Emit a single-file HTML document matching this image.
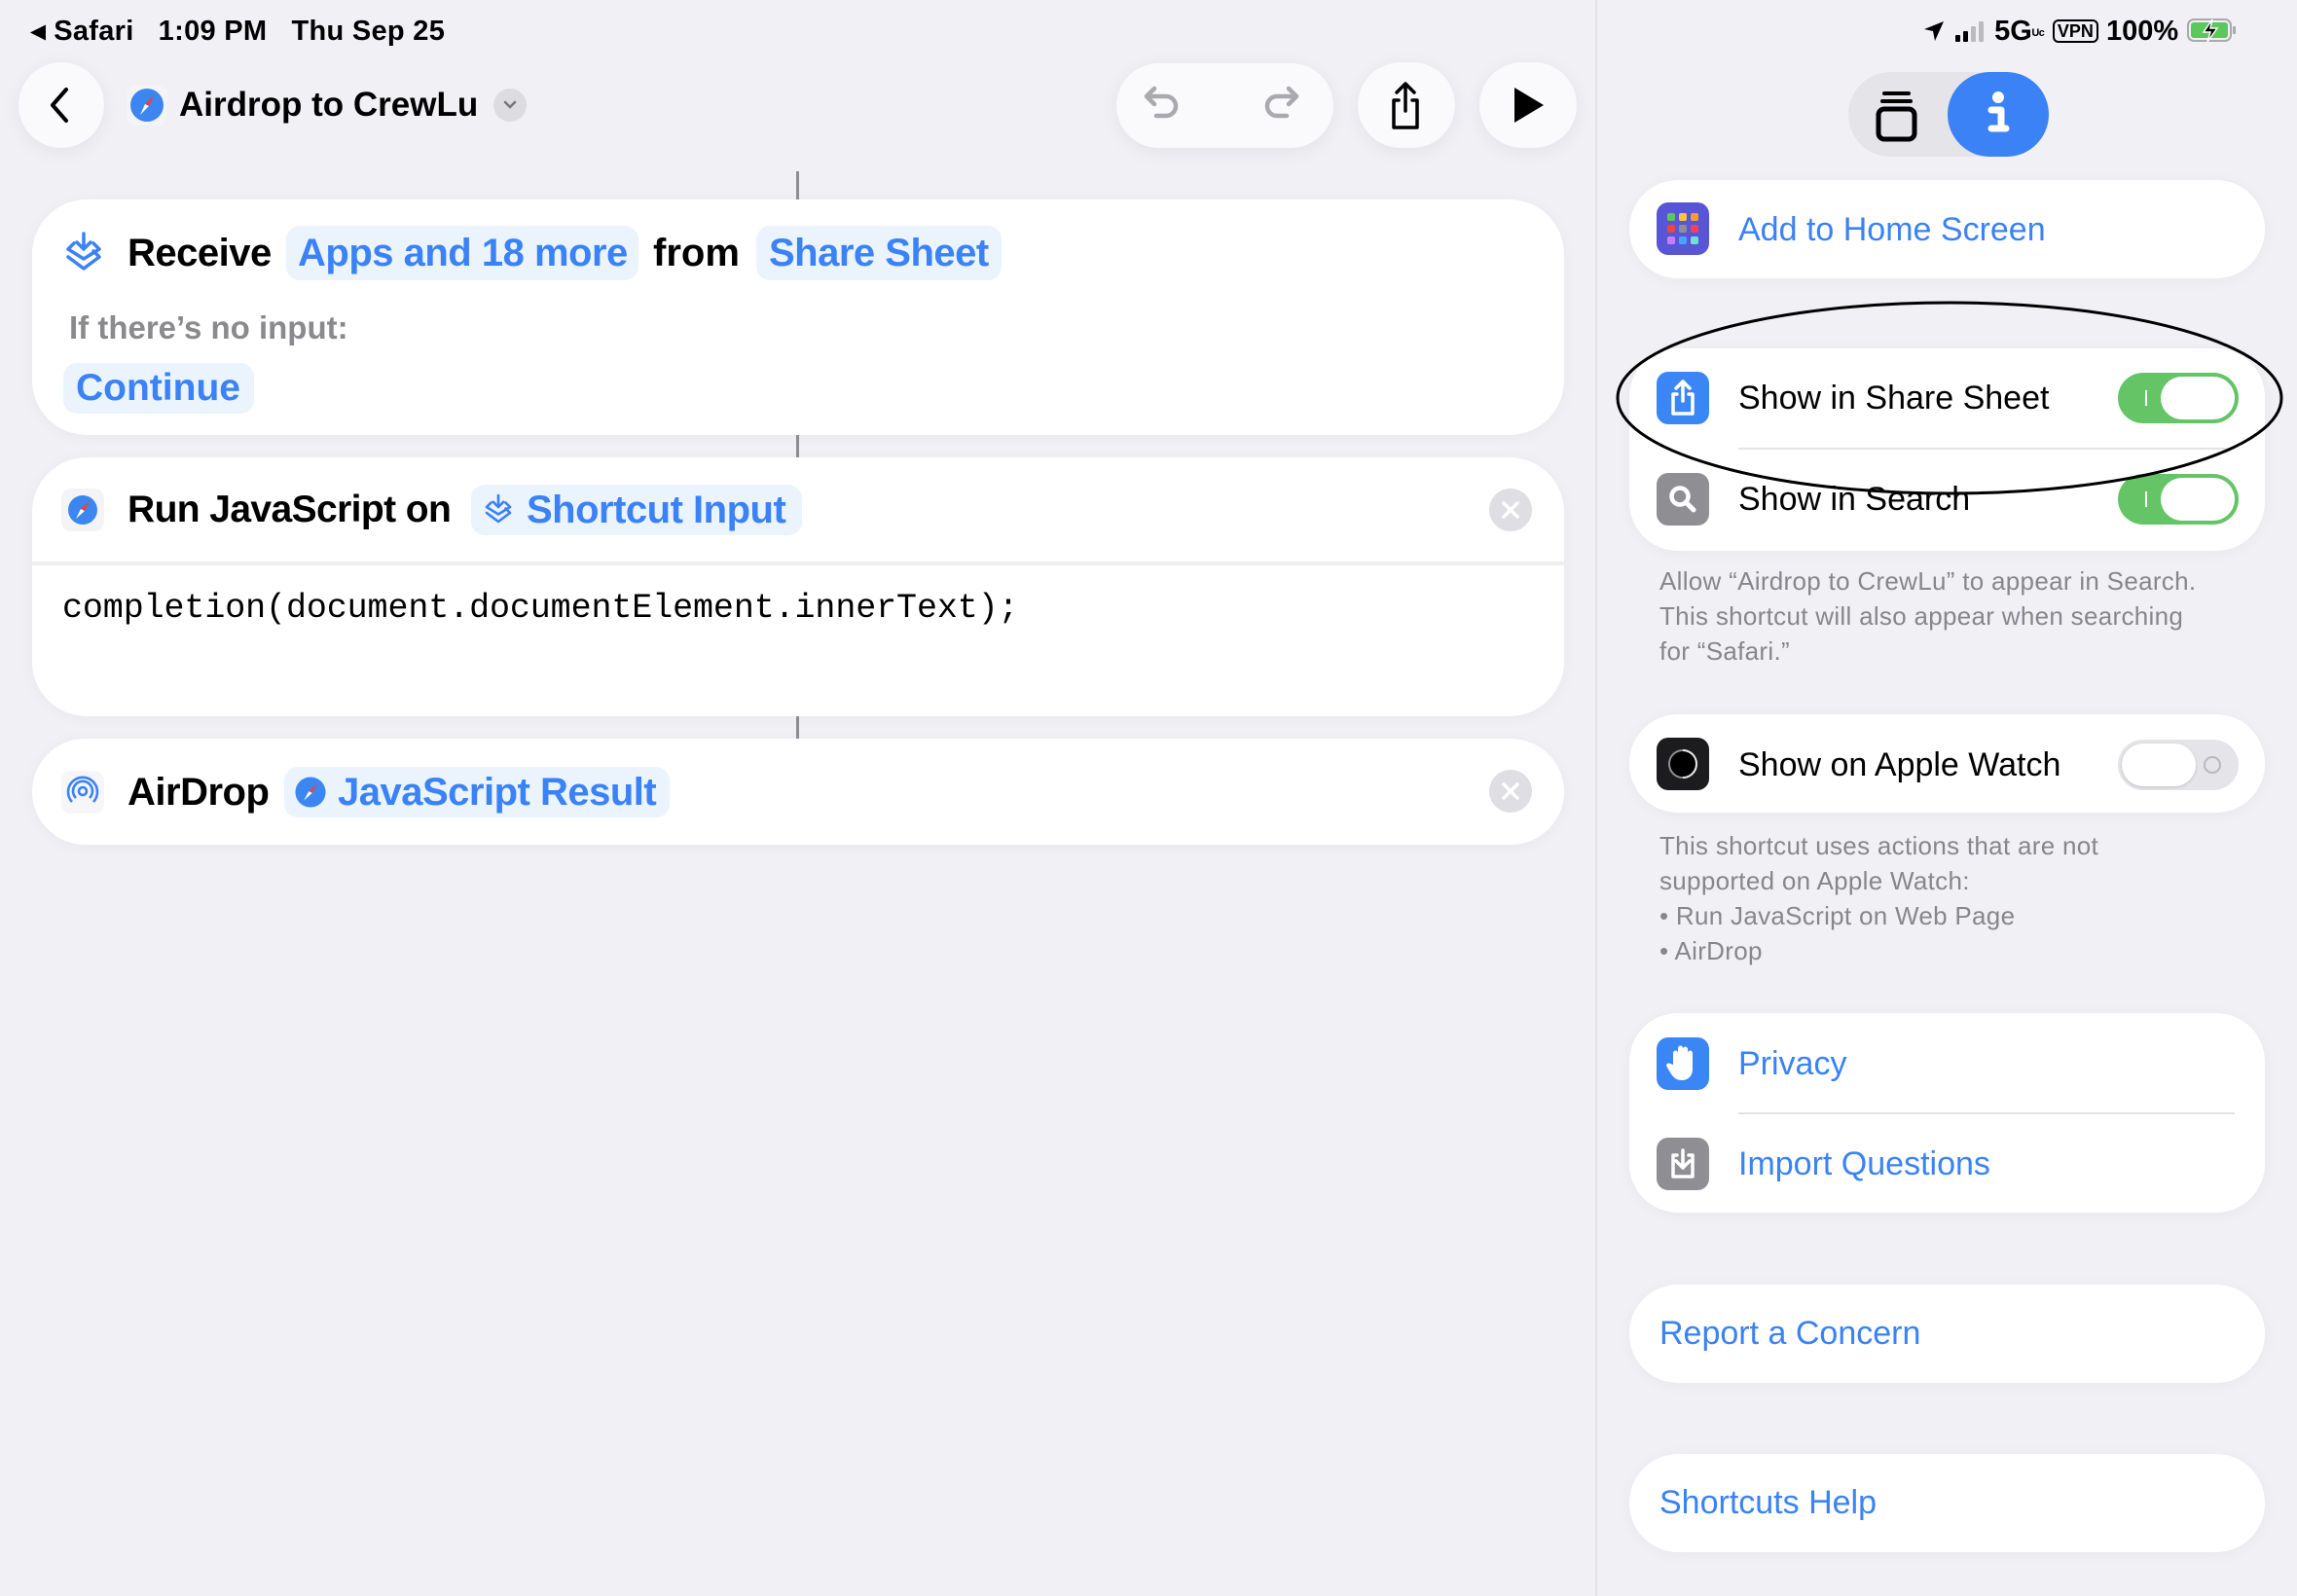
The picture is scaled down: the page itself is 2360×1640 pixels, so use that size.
<!DOCTYPE html>
<html><head><meta charset="utf-8"><style>
*{margin:0;padding:0;box-sizing:border-box}
body{width:2360px;height:1640px;background:#f0f0f5;font-family:"Liberation Sans",sans-serif;position:relative;overflow:hidden;color:#000}
.a{position:absolute}
.t{position:absolute;white-space:nowrap}
.card{position:absolute;background:#fff;border-radius:56px;box-shadow:0 2px 16px rgba(0,0,0,0.04)}
.blue{color:#3a82f6}
.tok{position:absolute;background:#ebf3fd;border-radius:14px}
.circ{position:absolute;background:#fafafd;border-radius:50%;box-shadow:0 4px 20px rgba(0,0,0,0.06)}
.sw{position:absolute;width:124px;height:52px;border-radius:26px;background:#65c466}
.sw .k{position:absolute;right:4px;top:4px;width:76px;height:44px;border-radius:22px;background:#fff}
.sw .l{position:absolute;left:28px;top:18px;width:2px;height:16px;background:#fff}
.foot{position:absolute;left:1705px;font-size:26px;color:#86868b;line-height:36px;letter-spacing:0.3px}
.ri{position:absolute;width:54px;height:54px;border-radius:12px}
</style></head><body>
<div class="a" style="left:1639px;top:0;width:2px;height:1640px;background:#e2e2e7"></div>

<div class="t" style="left:32px;top:15px;font-size:29px;font-weight:bold;line-height:34px;letter-spacing:0.3px">◂ Safari&nbsp;&nbsp; 1:09 PM&nbsp;&nbsp; Thu Sep 25</div>
<div class="t" style="left:1975px;top:15px;font-size:29px;font-weight:bold;line-height:34px">
<svg width="24" height="24" viewBox="0 0 24 24" style="vertical-align:-3px"><path d="M22 2L2 10l9 2 2 10z" fill="#000"/></svg>
<svg width="34" height="24" viewBox="0 0 34 24" style="vertical-align:-3px"><rect x="2" y="16" width="5" height="7" rx="1"/><rect x="10" y="12" width="5" height="11" rx="1"/><rect x="18" y="7" width="5" height="16" rx="1" fill="#bbb"/><rect x="26" y="2" width="5" height="21" rx="1" fill="#bbb"/></svg>
5G<span style="font-size:16px">ᵁᶜ</span> <span style="font-size:18px;border:2px solid #000;border-radius:6px;padding:0 3px;vertical-align:3px">VPN</span> 100%
<svg width="54" height="28" viewBox="0 0 54 28" style="vertical-align:-4px"><rect x="2" y="3" width="44" height="22" rx="6" fill="none" stroke="#aaa" stroke-width="2"/><rect x="5" y="6" width="38" height="16" rx="3" fill="#5ac85a"/><rect x="48" y="10" width="3" height="8" rx="1" fill="#aaa"/><path d="M27 3l-9 13h7l-3 10 10-14h-7z" fill="#000" stroke="#fff" stroke-width="1.5"/></svg>
</div>

<div class="circ" style="left:19px;top:64px;width:88px;height:88px"></div>
<svg class="a" style="left:48px;top:88px" width="30" height="40" viewBox="0 0 30 40"><path d="M20 4L6 20l14 16" fill="none" stroke="#000" stroke-width="4" stroke-linecap="round" stroke-linejoin="round"/></svg>
<svg class="a" style="left:130px;top:87px" width="42" height="42" viewBox="0 0 42 42"><rect width="42" height="42" rx="9" fill="#f4f4f6"/><circle cx="21" cy="21" r="17" fill="#3b86f0"/><path d="M28 11L19 20l4 2z" fill="#ff3b30"/><path d="M14 31l5-11 4 2z" fill="#fff"/></svg>
<div class="t" style="left:184px;top:86px;font-size:35px;font-weight:bold;line-height:44px">Airdrop to CrewLu</div>
<div class="a" style="left:507px;top:91px;width:34px;height:34px;border-radius:50%;background:#dcdce1"></div>
<svg class="a" style="left:515px;top:101px" width="18" height="14" viewBox="0 0 18 14"><path d="M4 4l5 5 5-5" fill="none" stroke="#777" stroke-width="2.5" stroke-linecap="round"/></svg>

<div class="a" style="left:1147px;top:65px;width:223px;height:87px;border-radius:44px;background:#fafafd;box-shadow:0 4px 20px rgba(0,0,0,0.06)"></div>
<svg class="a" style="left:1172px;top:85px" width="46" height="46" viewBox="0 0 46 46"><path d="M14 6L6 14l8 8M6 14h20a10 10 0 0 1 0 20h-10" fill="none" stroke="#a9a9ae" stroke-width="4.5" stroke-linecap="round" stroke-linejoin="round"/></svg>
<svg class="a" style="left:1292px;top:85px" width="46" height="46" viewBox="0 0 46 46"><path d="M32 6l8 8-8 8M40 14H20a10 10 0 0 0 0 20h10" fill="none" stroke="#a9a9ae" stroke-width="4.5" stroke-linecap="round" stroke-linejoin="round"/></svg>
<div class="circ" style="left:1395px;top:64px;width:100px;height:88px;border-radius:44px"></div>
<svg class="a" style="left:1424px;top:82px" width="40" height="54" viewBox="0 0 40 54"><path d="M20 4v28M11 13l9-9 9 9M13 21H8v28h24V21h-5" fill="none" stroke="#000" stroke-width="3.5" stroke-linecap="round" stroke-linejoin="round"/></svg>
<div class="circ" style="left:1520px;top:64px;width:100px;height:88px;border-radius:44px"></div>
<svg class="a" style="left:1552px;top:88px" width="36" height="40" viewBox="0 0 36 40"><path d="M4 2l30 18L4 38z" fill="#000"/></svg>

<div class="a" style="left:818px;top:176px;width:3px;height:30px;background:#8e8e93"></div>
<div class="a" style="left:818px;top:447px;width:3px;height:23px;background:#8e8e93"></div>
<div class="a" style="left:818px;top:736px;width:3px;height:23px;background:#8e8e93"></div>

<div class="card" style="left:33px;top:205px;width:1574px;height:242px"></div>
<svg class="a" style="left:66px;top:237px" width="40" height="46" viewBox="0 0 40 46"><path d="M20 3v16M13 12l7 7 7-7M10 13l-6 6 16 10 16-10-6-6M4 27l16 12 16-12-6-6" fill="none" stroke="#3a82f6" stroke-width="3.5" stroke-linecap="round" stroke-linejoin="round"/></svg>
<div class="t" style="left:131px;top:237px;font-size:40px;font-weight:bold;line-height:46px;letter-spacing:-0.5px">Receive</div>
<div class="tok" style="left:294px;top:232px;width:362px;height:56px"></div>
<div class="t blue" style="left:306px;top:237px;font-size:40px;font-weight:bold;line-height:46px;letter-spacing:-0.5px">Apps and 18 more</div>
<div class="t" style="left:671px;top:237px;font-size:40px;font-weight:bold;line-height:46px">from</div>
<div class="tok" style="left:777px;top:232px;width:252px;height:56px"></div>
<div class="t blue" style="left:790px;top:237px;font-size:40px;font-weight:bold;line-height:46px;letter-spacing:-0.5px">Share Sheet</div>
<div class="t" style="left:71px;top:317px;font-size:33px;font-weight:bold;color:#8a8a8e;line-height:40px">If there’s no input:</div>
<div class="tok" style="left:65px;top:373px;width:196px;height:52px"></div>
<div class="t blue" style="left:78px;top:376px;font-size:39px;font-weight:bold;line-height:46px">Continue</div>

<div class="card" style="left:33px;top:470px;width:1574px;height:266px"></div>
<div class="a" style="left:33px;top:577px;width:1574px;height:4px;background:#eeeef0"></div>
<svg class="a" style="left:63px;top:502px" width="44" height="44" viewBox="0 0 44 44"><rect width="44" height="44" rx="10" fill="#f4f4f6"/><circle cx="22" cy="22" r="15" fill="#3b86f0"/><path d="M29 13L20 21l4 2z" fill="#ff3b30"/><path d="M15 31l5-10 4 2z" fill="#fff"/></svg>
<div class="t" style="left:131px;top:501px;font-size:39px;font-weight:bold;line-height:46px;letter-spacing:-0.6px">Run JavaScript on</div>
<div class="tok" style="left:484px;top:498px;width:340px;height:52px"></div>
<svg class="a" style="left:497px;top:505px" width="30" height="38" viewBox="0 0 40 46"><path d="M20 3v16M13 12l7 7 7-7M10 13l-6 6 16 10 16-10-6-6M4 27l16 12 16-12-6-6" fill="none" stroke="#3a82f6" stroke-width="3.5" stroke-linecap="round" stroke-linejoin="round"/></svg>
<div class="t blue" style="left:541px;top:501px;font-size:40px;font-weight:bold;line-height:46px;letter-spacing:-0.5px">Shortcut Input</div>
<div class="a" style="left:1530px;top:502px;width:44px;height:44px;border-radius:50%;background:#dedee3"></div>
<svg class="a" style="left:1530px;top:502px" width="44" height="44" viewBox="0 0 44 44"><path d="M15 15l14 14M29 15L15 29" stroke="#fff" stroke-width="3.5" stroke-linecap="round"/></svg>
<div class="t" style="left:64px;top:604px;font-family:'Liberation Mono',monospace;font-size:35px;line-height:42px;letter-spacing:-0.1px">completion(document.documentElement.innerText);</div>

<div class="card" style="left:33px;top:759px;width:1574px;height:109px"></div>
<svg class="a" style="left:63px;top:792px" width="44" height="44" viewBox="0 0 44 44"><rect width="44" height="44" rx="10" fill="#f6f6f8"/><g fill="none" stroke="#3a82f6" stroke-width="2.6"><circle cx="22" cy="21" r="4"/><path d="M15 28a10 10 0 1 1 14 0M11 32a15 15 0 1 1 22 0"/></g></svg>
<div class="t" style="left:131px;top:791px;font-size:40px;font-weight:bold;line-height:46px;letter-spacing:-0.5px">AirDrop</div>
<div class="tok" style="left:292px;top:788px;width:396px;height:52px"></div>
<svg class="a" style="left:300px;top:795px" width="38" height="38" viewBox="0 0 44 44"><circle cx="22" cy="22" r="18" fill="#3b86f0"/><path d="M30 12L20 21l4 2z" fill="#ff3b30"/><path d="M14 32l6-11 4 2z" fill="#fff"/></svg>
<div class="t blue" style="left:347px;top:791px;font-size:40px;font-weight:bold;line-height:46px;letter-spacing:-0.5px">JavaScript Result</div>
<div class="a" style="left:1530px;top:791px;width:44px;height:44px;border-radius:50%;background:#dedee3"></div>
<svg class="a" style="left:1530px;top:791px" width="44" height="44" viewBox="0 0 44 44"><path d="M15 15l14 14M29 15L15 29" stroke="#fff" stroke-width="3.5" stroke-linecap="round"/></svg>

<div class="a" style="left:1899px;top:74px;width:205px;height:87px;border-radius:44px;background:#e4e4e9"></div>
<svg class="a" style="left:1923px;top:88px" width="50" height="58" viewBox="0 0 50 58"><rect x="7" y="24" width="37" height="31" rx="6" fill="none" stroke="#000" stroke-width="5"/><rect x="9" y="14" width="33" height="4" rx="2"/><rect x="11" y="6" width="29" height="4" rx="2"/></svg>
<div class="a" style="left:2001px;top:74px;width:104px;height:87px;border-radius:44px;background:#3a82f6"></div>
<svg class="a" style="left:2036px;top:90px" width="34" height="54" viewBox="0 0 34 54"><circle cx="17" cy="10" r="6" fill="#fff"/><path d="M10 23h10v19h5M10 42h15" fill="none" stroke="#fff" stroke-width="7" stroke-linecap="round" stroke-linejoin="round"/></svg>

<div class="card" style="left:1674px;top:185px;width:653px;height:101px;border-radius:50px"></div>
<div class="ri" style="left:1702px;top:208px;background:#5856d6"></div>
<svg class="a" style="left:1710px;top:216px" width="38" height="38" viewBox="0 0 38 38">
<rect x="3" y="3" width="8" height="8" rx="2" fill="#5ac85a"/><rect x="15" y="3" width="8" height="8" rx="2" fill="#f5c542"/><rect x="27" y="3" width="8" height="8" rx="2" fill="#f39a3b"/>
<rect x="3" y="15" width="8" height="8" rx="2" fill="#ef4444"/><rect x="15" y="15" width="8" height="8" rx="2" fill="#8e8e93"/><rect x="27" y="15" width="8" height="8" rx="2" fill="#ef4461"/>
<rect x="3" y="27" width="8" height="8" rx="2" fill="#c77dff"/><rect x="15" y="27" width="8" height="8" rx="2" fill="#4aa3ff"/><rect x="27" y="27" width="8" height="8" rx="2" fill="#6ee0d8"/></svg>
<div class="t blue" style="left:1786px;top:216px;font-size:34px;line-height:40px">Add to Home Screen</div>

<div class="card" style="left:1674px;top:358px;width:653px;height:208px;border-radius:50px"></div>
<div class="a" style="left:1786px;top:460px;width:510px;height:2px;background:#e4e4e8"></div>
<div class="ri" style="left:1702px;top:382px;background:#3a86f4"></div>
<svg class="a" style="left:1712px;top:388px" width="34" height="42" viewBox="0 0 34 42"><path d="M17 4v20M10 11l7-7 7 7M11 17H7v20h20V17h-4" fill="none" stroke="#fff" stroke-width="3.5" stroke-linecap="round" stroke-linejoin="round"/></svg>
<div class="t" style="left:1786px;top:389px;font-size:34px;line-height:40px">Show in Share Sheet</div>
<div class="sw" style="left:2176px;top:383px"><div class="l"></div><div class="k"></div></div>
<div class="ri" style="left:1702px;top:486px;background:#8e8e93"></div>
<svg class="a" style="left:1712px;top:496px" width="34" height="34" viewBox="0 0 34 34"><circle cx="14" cy="14" r="8.5" fill="none" stroke="#fff" stroke-width="4.5"/><path d="M20 20l8 8" stroke="#fff" stroke-width="5" stroke-linecap="round"/></svg>
<div class="t" style="left:1786px;top:493px;font-size:34px;line-height:40px">Show in Search</div>
<div class="sw" style="left:2176px;top:487px"><div class="l"></div><div class="k"></div></div>
<svg class="a" style="left:1658px;top:306px" width="690" height="206" viewBox="0 0 690 206"><ellipse cx="345" cy="103" rx="341" ry="98" fill="none" stroke="#000" stroke-width="3"/></svg>

<div class="foot" style="top:579px">Allow “Airdrop to CrewLu” to appear in Search.<br>This shortcut will also appear when searching<br>for “Safari.”</div>

<div class="card" style="left:1674px;top:734px;width:653px;height:101px;border-radius:50px"></div>
<div class="ri" style="left:1702px;top:758px;background:#1c1c1e"></div>
<svg class="a" style="left:1710px;top:766px" width="38" height="38" viewBox="0 0 38 38"><circle cx="19" cy="19" r="14" fill="#000" stroke="#8e8e93" stroke-width="2"/><path d="M19 5a14 14 0 0 1 0 28" fill="none" stroke="#e5e5ea" stroke-width="2"/></svg>
<div class="t" style="left:1786px;top:766px;font-size:34px;line-height:40px">Show on Apple Watch</div>
<div class="a" style="left:2176px;top:760px;width:124px;height:52px;border-radius:26px;background:#e4e4e9"></div>
<div class="a" style="left:2180px;top:764px;width:76px;height:44px;border-radius:22px;background:#fff;box-shadow:0 1px 3px rgba(0,0,0,0.15)"></div>
<div class="a" style="left:2264px;top:777px;width:18px;height:18px;border-radius:50%;border:2px solid #b8b8bd"></div>

<div class="foot" style="top:851px">This shortcut uses actions that are not<br>supported on Apple Watch:<br>• Run JavaScript on Web Page<br>• AirDrop</div>

<div class="card" style="left:1674px;top:1041px;width:653px;height:205px;border-radius:50px"></div>
<div class="a" style="left:1786px;top:1143px;width:510px;height:2px;background:#e4e4e8"></div>
<div class="ri" style="left:1702px;top:1066px;background:#3a86f4"></div>
<svg class="a" style="left:1710px;top:1070px" width="38" height="46" viewBox="0 0 38 46"><path d="M9 24V12a2.5 2.5 0 0 1 5 0v8V7a2.5 2.5 0 0 1 5 0v13V8a2.5 2.5 0 0 1 5 0v12-8a2.5 2.5 0 0 1 5 0v16c0 8-5 12-11 12s-9-3-12-8l-4-7a2.5 2.5 0 0 1 4-2z" fill="#fff"/></svg>
<div class="t blue" style="left:1786px;top:1073px;font-size:34px;line-height:40px">Privacy</div>
<div class="ri" style="left:1702px;top:1169px;background:#8e8e93"></div>
<svg class="a" style="left:1712px;top:1176px" width="34" height="40" viewBox="0 0 34 40"><path d="M17 6v18M10 17l7 7 7-7M11 11H7v22h20V11h-4" fill="none" stroke="#fff" stroke-width="3.5" stroke-linecap="round" stroke-linejoin="round"/></svg>
<div class="t blue" style="left:1786px;top:1176px;font-size:34px;line-height:40px">Import Questions</div>

<div class="card" style="left:1674px;top:1320px;width:653px;height:101px;border-radius:50px"></div>
<div class="t blue" style="left:1705px;top:1350px;font-size:34px;line-height:40px">Report a Concern</div>
<div class="card" style="left:1674px;top:1494px;width:653px;height:101px;border-radius:50px"></div>
<div class="t blue" style="left:1705px;top:1524px;font-size:34px;line-height:40px">Shortcuts Help</div>
</body></html>
